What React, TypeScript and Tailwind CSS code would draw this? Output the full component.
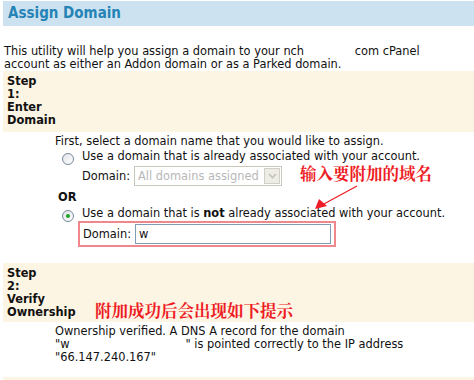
export default function App() {
  return (
    <div className="relative w-[474px] h-[380px] overflow-hidden bg-white text-[11.4px] leading-[13px] text-[#111] font-['DejaVu_Sans',sans-serif]">
      <div className="ml-[3px] mt-[1px] h-[25px] bg-[#cce2f0] pl-[5px] flex items-center">
        <h1 className="text-[15px] font-bold text-[#2583b6] leading-none font-['DejaVu_Sans_Condensed','DejaVu_Sans',sans-serif]">Assign Domain</h1>
      </div>

      <p className="mt-[19px] pl-[4px] pr-[6px]">
        This utility will help you assign a domain to your nch&nbsp;&nbsp;&nbsp;&nbsp;&nbsp;&nbsp;&nbsp;&nbsp;&nbsp;&nbsp;&nbsp;&nbsp;&nbsp; com cPanel
        <br />
        account as either an Addon domain or as a Parked domain.
      </p>

      <div className="ml-[3px] bg-[#fdf5e4] pl-[4px] pt-[4px] pb-[5px]">
        <div className="w-[20px] font-bold">Step 1: Enter Domain</div>
      </div>

      <div className="pl-[55px] pt-[3px]">
        <div>First, select a domain name that you would like to assign.</div>
        <div className="flex items-start mt-[2px]">
          <span className="mt-[3px] ml-[7px] w-[12px] h-[12px] rounded-full border border-[#7a8a99] bg-gradient-to-br from-[#dfe3e8] to-white" />
          <span className="ml-[8px]">Use a domain that is already associated with your account.</span>
        </div>
        <div className="flex items-center ml-[27px] mt-[1px]">
          <span>Domain:</span>
          <div className="ml-[4px] w-[148px] h-[20px] border border-[#c9c7ba] bg-white flex items-center justify-between pl-[3px] pr-[1px]">
            <span className="text-[#b8b8b8]">All domains assigned</span>
            <span className="w-[16px] h-[16px] bg-[#eeede5] border border-[#d2d0c6] flex items-center justify-center">
              <svg width="9" height="6" viewBox="0 0 9 6"><path d="M1 1l3.5 3.5L8 1" stroke="#c5c3b8" strokeWidth="1.6" fill="none" /></svg>
            </span>
          </div>
        </div>
        <div className="font-bold ml-[3px] mt-[5px]">OR</div>
        <div className="flex items-start mt-[3px]">
          <span className="mt-[3px] ml-[7px] w-[12px] h-[12px] rounded-full border border-[#7a8a99] bg-gradient-to-br from-[#dfe3e8] to-white flex items-center justify-center">
            <span className="w-[4px] h-[4px] rounded-full bg-[#21a121]" />
          </span>
          <span className="ml-[8px]">Use a domain that is <b>not</b> already associated with your account.</span>
        </div>
        <div className="ml-[23px] mt-[-1px] w-[258px] h-[26px] border-2 border-[#f0878c] flex items-center pl-[3px]">
          <span>Domain:</span>
          <div className="ml-[4px] w-[196px] h-[20px] border border-[#7f9db9] bg-white pl-[3px] flex items-center">w</div>
        </div>
      </div>

      <div className="absolute left-[300px] top-[165px] text-[16.5px] leading-[16px] font-bold text-[#ee1c24] font-['Noto_Serif_CJK_SC','Noto_Sans_CJK_SC',serif]">输入要附加的域名</div>
      <svg className="absolute left-[300px] top-[182px]" width="70" height="40" viewBox="0 0 70 40">
        <line x1="57" y1="4" x2="22" y2="23" stroke="#ee1c24" strokeWidth="1.2" />
        <path d="M15 27 L19 17 L27 24 Z" fill="#ee1c24" />
      </svg>

      <div className="ml-[3px] mt-[16px] bg-[#fdf5e4] pl-[4px] pt-[4px] pb-[3px] flex items-end">
        <div className="w-[20px] font-bold">Step 2: Verify Ownership</div>
        <div className="ml-[68px] text-[16.5px] leading-[18px] font-bold text-[#ee1c24] font-['Noto_Serif_CJK_SC','Noto_Sans_CJK_SC',serif]">附加成功后会出现如下提示</div>
      </div>

      <div className="pl-[55px] pt-[3px]">
        Ownership verified. A DNS A record for the domain
        <br />
        "w&nbsp;&nbsp;&nbsp;&nbsp;&nbsp;&nbsp;&nbsp;&nbsp;&nbsp;&nbsp;&nbsp;&nbsp;&nbsp;&nbsp;&nbsp;&nbsp;&nbsp;&nbsp;&nbsp;&nbsp;&nbsp;&nbsp;&nbsp;&nbsp;&nbsp;&nbsp;&nbsp;&nbsp;&nbsp;&nbsp;&nbsp;&nbsp;" is pointed correctly to the IP address
        <br />
        "66.147.240.167"
      </div>

      <div className="ml-[3px] mt-[13px] h-[6px] bg-[#fdf5e4]" />
    </div>
  );
}
